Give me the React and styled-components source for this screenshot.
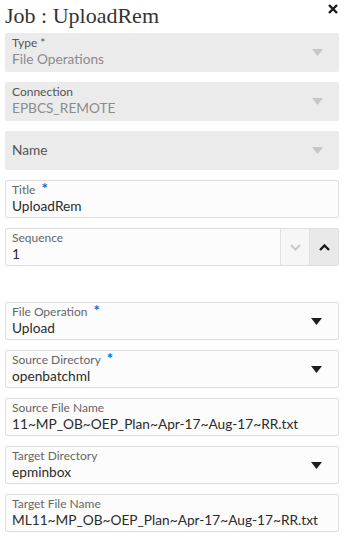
import React from "react";
import styled, { createGlobalStyle } from "styled-components";

const Global = createGlobalStyle`
  html, body { margin: 0; padding: 0; background: #ffffff; }
  body { font-family: Lato, "Open Sans", sans-serif; }
`;

const Page = styled.div`
  width: 334px;
  padding: 0 9px 20px 5px;
  display: flex;
  flex-direction: column;
`;

const Header = styled.div`
  height: 33px;
  display: flex;
  justify-content: space-between;
  align-items: flex-start;
`;

const Title = styled.h1`
  margin: 3px 0 0 0;
  font-family: "Liberation Serif", serif;
  font-weight: normal;
  font-size: 22px;
  line-height: 26px;
  color: #333;
`;

const Close = styled.button`
  border: none;
  background: none;
  padding: 0;
  margin: 4px 1px 0 0;
  width: 10px;
  height: 10px;
  display: flex;
  cursor: pointer;
`;

const Form = styled.div`
  display: flex;
  flex-direction: column;
  gap: 10px;
`;

const Spacer = styled.div`
  height: 16px;
`;

const Field = styled.div`
  box-sizing: border-box;
  height: ${(p) => (p.$disabled ? "39px" : "38px")};
  border-radius: 2px;
  background: ${(p) => (p.$disabled ? "#ebebeb" : "#fcfcfc")};
  border: ${(p) => (p.$disabled ? "none" : "1px solid #dedede")};
  display: flex;
  align-items: stretch;
  overflow: hidden;
`;

const Body = styled.div`
  flex: 1;
  min-width: 0;
  display: flex;
  flex-direction: column;
  padding: ${(p) => (p.$disabled ? "2px 0 0 7px" : "1px 0 0 6px")};
`;

const Label = styled.div`
  font-size: 12px;
  line-height: 15px;
  color: ${(p) => (p.$disabled ? "#555" : "#666")};
  display: flex;
  align-items: flex-start;
`;

const Req = styled.span`
  color: #0572ce;
  font-size: 15px;
  line-height: 12px;
  font-weight: bold;
  margin-left: 6px;
  margin-top: 0px;
`;

const Value = styled.div`
  font-size: 13.7px;
  line-height: 17px;
  color: ${(p) => (p.$disabled ? "#8c8c8c" : "#2b2b2b")};
  white-space: nowrap;
`;

const Placeholder = styled.div`
  font-size: 13.7px;
  color: #555;
  padding: 0 0 2px 7px;
  align-self: center;
  flex: 1;
`;

const Arrow = styled.div`
  width: 36px;
  display: flex;
  align-items: center;
  justify-content: center;
  padding-right: 4px;
`;

const Triangle = ({ color }) => (
  <svg width="11" height="7" viewBox="0 0 11 7">
    <path d="M0 0 L11 0 L5.5 7 Z" fill={color} />
  </svg>
);

const SpinBtn = styled.button`
  width: 29px;
  border: none;
  border-left: 1px solid #e0e0e0;
  background: ${(p) => (p.$active ? "#e9e9e9" : "#f6f6f6")};
  display: flex;
  align-items: center;
  justify-content: center;
  padding: 0;
`;

const Chevron = ({ up, color, width }) => (
  <svg width="11" height="7" viewBox="0 0 11 7">
    <path
      d={up ? "M1 6 L5.5 1.5 L10 6" : "M1 1 L5.5 5.5 L10 1"}
      fill="none"
      stroke={color}
      strokeWidth={width}
    />
  </svg>
);

function SelectField({ label, value, required, disabled }) {
  return (
    <Field $disabled={disabled}>
      <Body $disabled={disabled}>
        <Label $disabled={disabled}>
          {label}
          {required && <Req>*</Req>}
        </Label>
        <Value $disabled={disabled}>{value}</Value>
      </Body>
      <Arrow>
        <Triangle color={disabled ? "#c6c6c6" : "#1f1f1f"} />
      </Arrow>
    </Field>
  );
}

function TextField({ label, value, required }) {
  return (
    <Field>
      <Body>
        <Label>
          {label}
          {required && <Req>*</Req>}
        </Label>
        <Value>{value}</Value>
      </Body>
    </Field>
  );
}

export default function App() {
  return (
    <>
      <Global />
      <Page>
        <Header>
          <Title>Job : UploadRem</Title>
          <Close aria-label="Close">
            <svg width="10" height="10" viewBox="0 0 10 10">
              <path d="M1 1 L9 9 M9 1 L1 9" stroke="#1a1a1a" strokeWidth="2.4" />
            </svg>
          </Close>
        </Header>
        <Form>
          <Field $disabled>
            <Body $disabled>
              <Label $disabled>Type *</Label>
              <Value $disabled>File Operations</Value>
            </Body>
            <Arrow>
              <Triangle color="#c6c6c6" />
            </Arrow>
          </Field>
          <SelectField label="Connection" value="EPBCS_REMOTE" disabled />
          <Field $disabled>
            <Placeholder>Name</Placeholder>
            <Arrow>
              <Triangle color="#c6c6c6" />
            </Arrow>
          </Field>
          <TextField label="Title" value="UploadRem" required />
          <Field>
            <Body>
              <Label>Sequence</Label>
              <Value>1</Value>
            </Body>
            <SpinBtn aria-label="Decrease">
              <Chevron color="#c9c9c9" width={2} />
            </SpinBtn>
            <SpinBtn $active aria-label="Increase">
              <Chevron up color="#1a1a1a" width={2.4} />
            </SpinBtn>
          </Field>
          <Spacer />
          <SelectField label="File Operation" value="Upload" required />
          <SelectField label="Source Directory" value="openbatchml" required />
          <TextField
            label="Source File Name"
            value="11~MP_OB~OEP_Plan~Apr-17~Aug-17~RR.txt"
          />
          <SelectField label="Target Directory" value="epminbox" />
          <TextField
            label="Target File Name"
            value="ML11~MP_OB~OEP_Plan~Apr-17~Aug-17~RR.txt"
          />
        </Form>
      </Page>
    </>
  );
}
